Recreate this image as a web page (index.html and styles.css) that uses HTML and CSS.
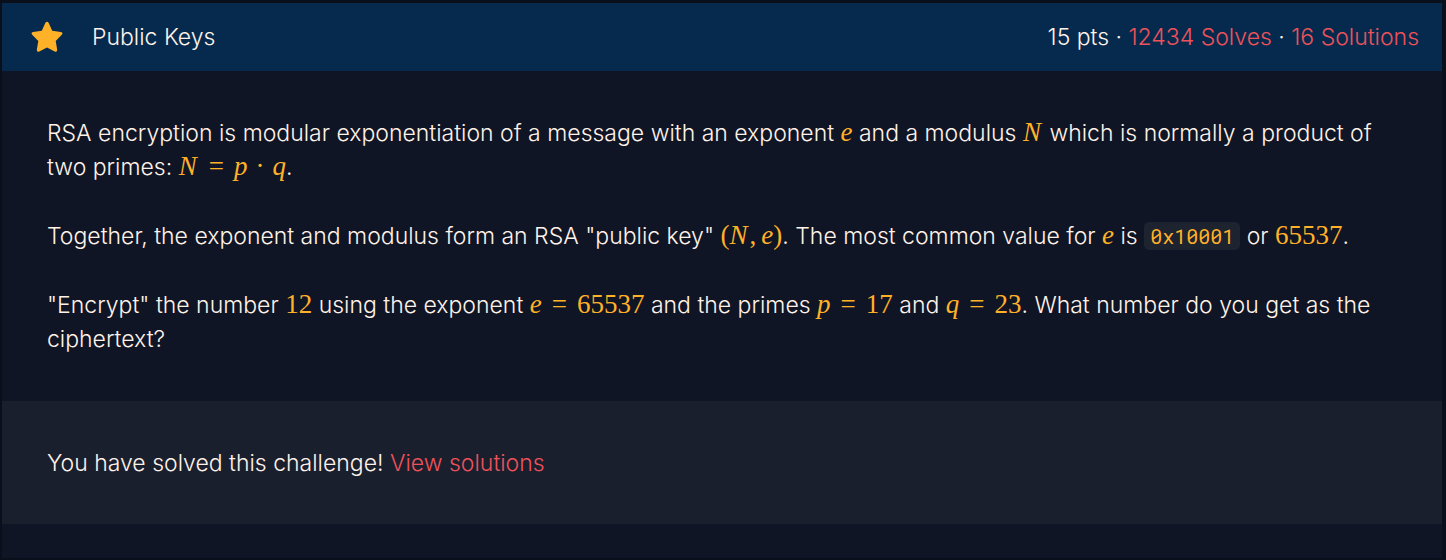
FILE: index.html
```html
<!DOCTYPE html>
<html lang="en">
<head>
<meta charset="utf-8">
<meta name="viewport" content="width=device-width, initial-scale=1">
<title>Public Keys</title>
<link rel="stylesheet" href="styles.css">
</head>
<body>
<article class="challenge">
  <header class="challenge-header">
    <svg class="star" viewBox="0 0 32 32" aria-hidden="true"><path d="M14.4 1.7Q16 -.4 17.6 1.7L21.2 9.7L29.8 10.9Q32.5 11.7 30.8 13.8L24.7 20L26.2 28.8Q26.2 31.6 23.7 30.6L16 26.5L8.3 30.6Q5.8 31.6 5.8 28.8L7.3 20L1.2 13.8Q-.5 11.7 2.2 10.9L10.8 9.7Z"/></svg>
    <h1 class="title">Public Keys</h1>
    <div class="stats">15 pts · <a href="#solves">12434 Solves</a> · <a href="#solutions">16 Solutions</a></div>
  </header>
  <div class="description">
    <p>RSA encryption is modular exponentiation of a message with an exponent <span class="math"><i>e</i></span> and a modulus <span class="math"><i class="wide">N</i></span> which is normally a product of two primes: <span class="math"><i class="wide">N</i><span class="rel">=</span><i>p</i><span class="op">·</span><i>q</i></span>.</p>
    <p>Together, the exponent and modulus form an RSA "public key" <span class="math">(<i class="wide">N</i><span class="comma">,</span><i>e</i>)</span>. The most common value for <span class="math"><i>e</i></span> is <code>0x10001</code> or <span class="math">65537</span>.</p>
    <p>"Encrypt" the number <span class="math">12</span> using the exponent <span class="math"><i>e</i><span class="rel">=</span>65537</span> and the primes <span class="math"><i>p</i><span class="rel">=</span>17</span> and <span class="math"><i>q</i><span class="rel">=</span>23</span>. What number do you get as the ciphertext?</p>
  </div>
  <footer class="solved">You have solved this challenge! <a href="#solutions">View solutions</a></footer>
</article>
</body>
</html>
```
FILE: styles.css
```css
* { box-sizing: border-box; }
body {
  margin: 0;
  padding: 3px 4px 2px 2px;
  min-height: 100vh;
  display: flex;
  background: #0a0f1c;
  color: #fff2e9;
  font: 300 23px/34px Inter, sans-serif;
}
.challenge { flex: 1; background: #0f1524; }
.challenge-header {
  display: flex;
  align-items: center;
  padding: 17px 23px 17px 29px;
  background: #062a4e;
}
.star { width: 32px; height: 32px; fill: #ffb128; }
.title { margin: 0 0 0 29px; font: inherit; }
.stats { margin-left: auto; }
a { color: #ec525a; text-decoration: none; }
.description {
  display: flex;
  flex-direction: column;
  gap: 35px;
  padding: 45px;
}
.description p { margin: 0; }
.math {
  color: #ffb128;
  font-family: "Liberation Serif", serif;
  font-size: 27px;
  font-weight: 400;
  line-height: 1;
  white-space: nowrap;
}
.wide { padding-right: 2px; }
.rel { padding: 0 10px; }
.op { padding: 0 8px; }
.comma { padding-right: 5px; }
code {
  padding: 1px 6px;
  border-radius: 5px;
  background: #1d232f;
  color: #ffb128;
  font: 400 20px/24px "Roboto Mono", "DejaVu Sans Mono", monospace;
}
.solved { padding: 45px 45px 44px; background: #1a1f2e; }
```
